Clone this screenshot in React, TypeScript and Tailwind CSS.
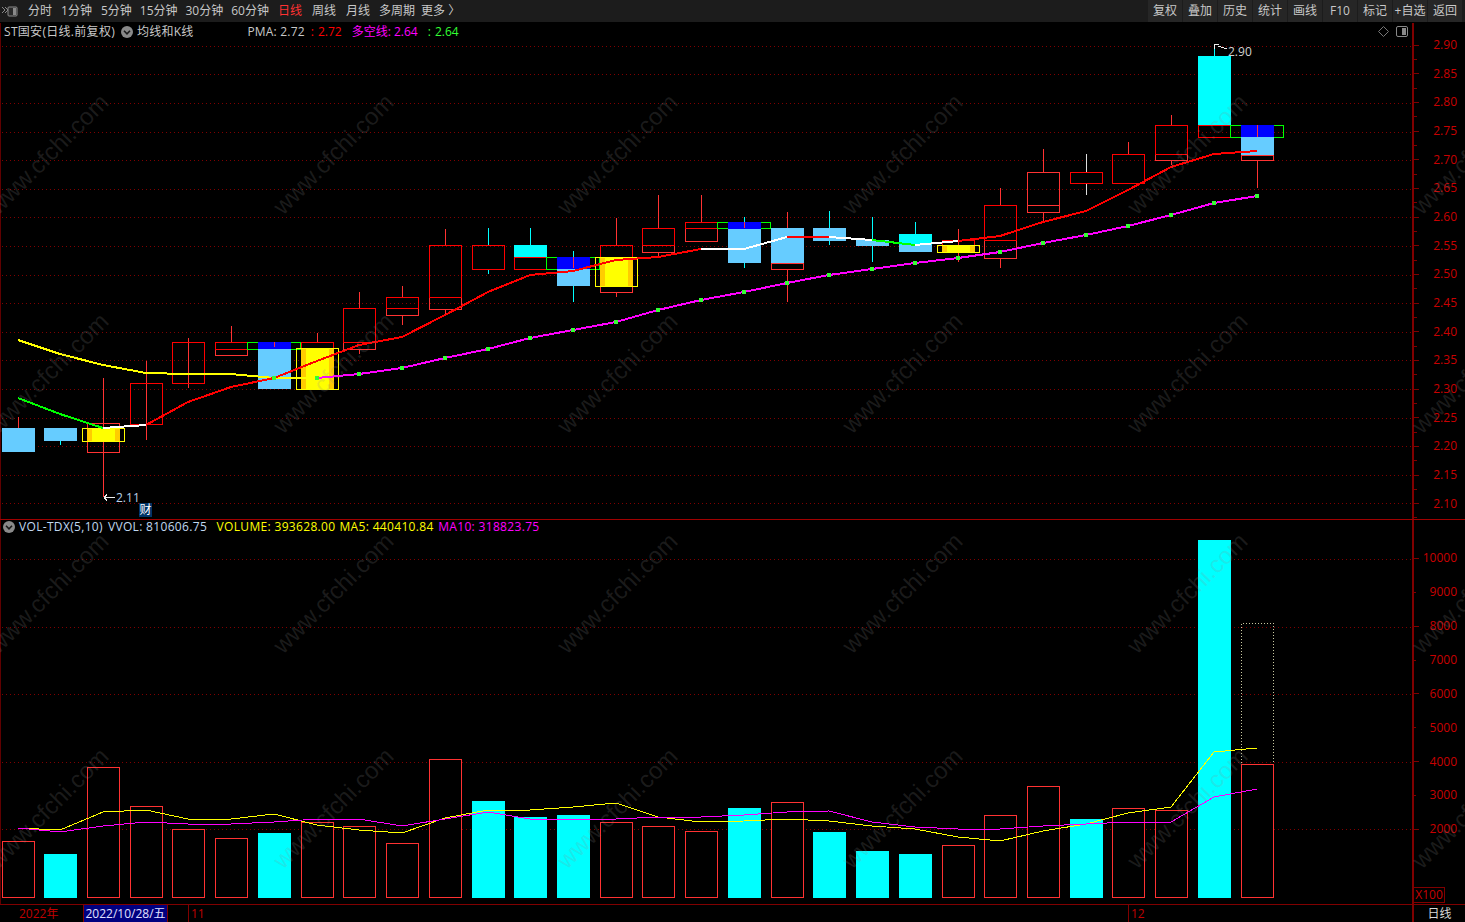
const R = "#ff0000";
const P = "#ff3232";
const C = "#00ffff";
const LB = "#66ccff";
const BL = "#0000ff";
const G = "#00ff00";
const Y = "#ffff00";
const O = "#ffcc00";

// left edge of each day's bar
const lefts = [2, 44, 87, 130, 172, 215, 258, 301, 343, 386, 429, 472, 514, 557, 600, 642, 685, 728, 771, 813, 856, 899, 942, 984, 1027, 1070, 1112, 1155, 1198, 1241];
const lx = (i: number) => lefts[i];
const cx = (i: number) => lefts[i] + 16;

type Seg = [number, number, string];

interface Candle {
  wicks?: Seg[];
  green?: [number, number];
  boxes?: Seg[];
  fills?: Seg[];
  over?: [number, number];
  tick?: [number, number];
}

const candles: Candle[] = [
  { wicks: [[417, 428, P]], fills: [[428, 452, LB]] },
  { wicks: [[441, 445, C]], fills: [[428, 441, LB]] },
  { wicks: [[378, 497, P]], boxes: [[423, 452, P]], over: [428, 441] },
  { wicks: [[361, 440, P]], boxes: [[383, 424, R]] },
  { wicks: [[338, 388, P]], boxes: [[342, 383, R]] },
  { wicks: [[326, 342, P]], boxes: [[342, 355, P], [342, 349, R]] },
  { green: [342, 349], fills: [[342, 349, BL], [349, 389, LB]], tick: [342, 347] },
  { wicks: [[333, 342, P]], boxes: [[342, 389, R]], over: [348, 389] },
  { wicks: [[292, 308, P], [349, 354, P]], boxes: [[342, 349, P], [308, 342, R]] },
  { wicks: [[286, 297, P], [315, 325, P]], boxes: [[308, 315, P], [297, 308, R]] },
  { wicks: [[229, 245, P], [309, 314, P]], boxes: [[297, 309, P], [245, 297, R]] },
  { wicks: [[228, 245, C], [269, 274, C]], boxes: [[245, 269, R]] },
  { wicks: [[228, 245, C]], fills: [[245, 257, C]], boxes: [[257, 269, R]] },
  { wicks: [[251, 257, C], [286, 302, C]], green: [257, 269], fills: [[257, 269, BL], [269, 286, LB]], tick: [257, 268] },
  { wicks: [[218, 245, P], [292, 297, P]], boxes: [[245, 292, P], [245, 257, R]], over: [257, 286] },
  { wicks: [[195, 228, P], [252, 257, P]], boxes: [[245, 252, P], [228, 245, R]] },
  { wicks: [[195, 222, P]], boxes: [[228, 241, P], [222, 228, R]] },
  { wicks: [[217, 222, C], [263, 268, C]], green: [222, 228], fills: [[222, 229, BL], [229, 263, LB]], tick: [222, 228] },
  { wicks: [[212, 228, P], [269, 302, P]], boxes: [[263, 269, P]], fills: [[228, 263, LB]] },
  { wicks: [[211, 245, C]], fills: [[228, 241, LB]] },
  { wicks: [[217, 262, C]], fills: [[240, 246, LB]] },
  { wicks: [[222, 234, C]], fills: [[245, 252, LB], [234, 245, C]] },
  { wicks: [[229, 262, P]], boxes: [[240, 252, R]], over: [245, 252] },
  { wicks: [[188, 205, P], [258, 268, P]], boxes: [[240, 258, P], [205, 240, R]] },
  { wicks: [[149, 172, P], [212, 222, P]], boxes: [[205, 212, P], [172, 205, P]] },
  { wicks: [[154, 172, "#dddddd"], [183, 195, "#dddddd"]], boxes: [[172, 183, R]] },
  { wicks: [[142, 154, P]], boxes: [[154, 183, R]] },
  { wicks: [[115, 125, P], [160, 165, P]], boxes: [[154, 160, P], [125, 154, R]] },
  { wicks: [[46, 56, C]], fills: [[56, 125, C]], boxes: [[125, 137, R]] },
  { wicks: [[160, 188, P]], green: [125, 137], fills: [[125, 137, BL], [137, 155, LB]], boxes: [[155, 160, P]], tick: [125, 137] },
];

// price moving average, split where it changes colour
const pmaRuns: { color: string; pts: [number, number][] }[] = [
  { color: Y, pts: [[0, 340], [1, 354], [2, 365], [3, 373], [4, 374], [5, 374], [6, 378], [7, 378]] },
  { color: G, pts: [[0, 398], [1, 414], [2, 428]] },
  { color: "#ffffff", pts: [[2, 428], [3, 425]] },
  { color: R, pts: [[3, 425], [4, 402], [5, 387], [6, 378], [7, 361], [8, 345], [9, 337], [10, 315], [11, 292], [12, 275], [13, 271], [14, 260], [15, 257], [16, 249]] },
  { color: "#ffffff", pts: [[16, 249], [17, 249], [18, 237]] },
  { color: R, pts: [[18, 237], [19, 237]] },
  { color: "#ffffff", pts: [[19, 237], [20, 240]] },
  { color: G, pts: [[20, 240], [21, 245]] },
  { color: "#ffffff", pts: [[21, 245], [22, 241]] },
  { color: R, pts: [[22, 241], [23, 236], [24, 222], [25, 211], [26, 190], [27, 167], [28, 154], [29, 151]] },
];

const longLine: [number, number][] = [
  [7, 378], [8, 374], [9, 368], [10, 358], [11, 349], [12, 338], [13, 330], [14, 322], [15, 310], [16, 300],
  [17, 292], [18, 283], [19, 275], [20, 269], [21, 263], [22, 258], [23, 252], [24, 243], [25, 235], [26, 226],
  [27, 215], [28, 203], [29, 196],
];

const volumes: [number, boolean][] = [
  [841, false], [854, true], [767, false], [806, false], [829, false], [838, false], [833, true], [822, false],
  [826, false], [843, false], [759, false], [801, true], [817, true], [815, true], [822, false], [826, false],
  [831, false], [808, true], [802, false], [832, true], [851, true], [854, true], [845, false], [815, false],
  [786, false], [819, true], [808, false], [810, false], [540, true], [764, false],
];

const ma5 = [828, 830, 812, 810, 819, 819, 814, 825, 830, 833, 818, 810, 810, 807, 803, 817, 822, 821, 819, 821, 826, 829, 837, 841, 831, 824, 813, 807, 752, 748];
const ma10 = [828, 832, 826, 822, 824, 824, 822, 819, 819, 826, 819, 812, 819, 819, 819, 817, 817, 815, 812, 811, 822, 827, 829, 829, 826, 824, 822, 822, 797, 789];

const toPoints = (pts: [number, number][]) => pts.map(([i, y]) => `${cx(i)},${y}`).join(" ");
const series = (ys: number[]) => ys.map((y, i) => `${cx(i)},${y}`).join(" ");

const priceLevels = Array.from({ length: 17 }, (_, k) => (2.9 - k * 0.05).toFixed(2));
const volumeLevels = [10000, 9000, 8000, 7000, 6000, 5000, 4000, 3000, 2000];

const rightTabs = ["复权", "叠加", "历史", "统计", "画线", "F10", "标记", "+自选", "返回"];

const CircleChevron = () => (
  <svg width="12" height="12" viewBox="0 0 12 12" className="shrink-0">
    <circle cx="6" cy="6" r="6" fill="#8a8a8a" />
    <path d="M3 4.8 L6 7.8 L9 4.8" fill="none" stroke="#1a1a1a" strokeWidth="1.6" />
  </svg>
);

const CandleShape = ({ c, i }: { c: Candle; i: number }) => {
  const x = lx(i);
  const mid = cx(i) + 0.5;
  return (
    <g>
      {c.wicks?.map(([a, b, color]) => (
        <line key={a} x1={mid} x2={mid} y1={a} y2={b} stroke={color} />
      ))}
      {c.green && (
        <rect x={x - 10.5} y={c.green[0] + 0.5} width={53} height={c.green[1] - c.green[0]} fill="none" stroke={G} />
      )}
      {c.fills?.map(([a, b, color]) => (
        <rect key={a} x={x} y={a} width={33} height={b - a} fill={color} />
      ))}
      {c.boxes?.map(([a, b, color]) => (
        <rect key={`${a}-${b}`} x={x + 0.5} y={a + 0.5} width={32} height={b - a} fill="none" stroke={color} />
      ))}
      {c.over && (
        <g>
          <rect x={x} y={c.over[0]} width={33} height={c.over[1] - c.over[0]} fill={Y} />
          <rect x={x} y={c.over[0]} width={5} height={c.over[1] - c.over[0]} fill={O} />
          <rect x={x + 28} y={c.over[0]} width={5} height={c.over[1] - c.over[0]} fill={O} />
          <rect x={x - 4.5} y={c.over[0] + 0.5} width={42} height={c.over[1] - c.over[0]} fill="none" stroke={Y} />
        </g>
      )}
      {c.tick && <line x1={mid} x2={mid} y1={c.tick[0]} y2={c.tick[1]} stroke={P} />}
    </g>
  );
};

const PriceChart = () => (
  <svg width="1412" height="496" viewBox="0 23 1412 496" shapeRendering="crispEdges" className="block shrink-0">
    <line x1="0.5" x2="0.5" y1="23" y2="519" stroke="#600000" />
    {priceLevels.map((_, k) => {
      const y = Math.round(45.8 + k * 28.6) + 0.5;
      return <line key={k} x1="2" x2="1412" y1={y} y2={y} stroke="#800000" strokeDasharray="1 3" />;
    })}
    {candles.map((c, i) => (
      <CandleShape key={i} c={c} i={i} />
    ))}
    {pmaRuns.map((run, k) => (
      <polyline key={k} points={toPoints(run.pts)} fill="none" stroke={run.color} strokeWidth="2" />
    ))}
    <polyline points={toPoints(longLine)} fill="none" stroke="#ff00ff" strokeWidth="2" />
    {longLine.map(([i, y]) => (
      <rect key={i} x={cx(i) - 2} y={y - 2} width="4" height="4" fill="#33ff33" />
    ))}
    <rect x={cx(6) - 2} y={376} width="4" height="4" fill="#33ff33" />
    <g stroke="#eeeeee">
      <line x1="1214" x2="1219" y1="44.5" y2="44.5" />
      <line x1="1214.5" x2="1214.5" y1="44" y2="49" />
      <line x1="1218" x2="1227" y1="46" y2="49" />
      <line x1="104" x2="115" y1="497.5" y2="497.5" />
      <line x1="104" x2="107" y1="497.5" y2="494.5" />
      <line x1="104" x2="107" y1="497.5" y2="500.5" />
    </g>
  </svg>
);

const VolumeChart = () => (
  <svg width="1412" height="384" viewBox="0 520 1412 384" shapeRendering="crispEdges" className="block shrink-0">
    <line x1="0.5" x2="0.5" y1="520" y2="904" stroke="#600000" />
    {[559, 627, 694, 762, 829].map((y) => (
      <line key={y} x1="2" x2="1412" y1={y + 0.5} y2={y + 0.5} stroke="#800000" strokeDasharray="1 3" />
    ))}
    {volumes.map(([top, solid], i) =>
      solid ? (
        <rect key={i} x={lx(i)} y={top} width="33" height={898 - top} fill={C} />
      ) : (
        <rect key={i} x={lx(i) + 0.5} y={top + 0.5} width="32" height={897 - top} fill="#000000" stroke={P} />
      )
    )}
    <path
      d={`M${lx(29) + 0.5} 763 V623.5 H${lx(29) + 32.5} V763`}
      fill="none"
      stroke="#c8c8a0"
      strokeDasharray="1 2"
    />
    <polyline points={series(ma5)} fill="none" stroke={Y} />
    <polyline points={series(ma10)} fill="none" stroke="#ff00ff" />
  </svg>
);

// watermark sits over both panels
const Watermark = () => {
  const xs = [54, 339, 623, 908, 1193, 1478];
  const ys = [160, 379, 599, 814];
  return (
    <svg width="1465" height="922" className="pointer-events-none absolute left-0 top-0">
      {ys.map((y) =>
        xs.map((x) => (
          <text
            key={`${x}-${y}`}
            x={x}
            y={y}
            textAnchor="middle"
            transform={`rotate(-45 ${x} ${y})`}
            fontSize="24"
            fill="#8c8c8c"
            fillOpacity="0.2"
            fontFamily='"Liberation Sans", sans-serif'
          >
            www.cfchi.com
          </text>
        ))
      )}
    </svg>
  );
};

export default function App() {
  return (
    <div className="relative flex h-[922px] w-[1465px] flex-col overflow-hidden bg-black font-['Open_Sans','Noto_Sans_CJK_SC',sans-serif] text-[12px] leading-none text-[#c8c8c8]">
      <header className="flex h-[23px] shrink-0 items-center border-b border-[#000000] bg-[#1c1c1c]">
        <svg width="16" height="12" viewBox="0 0 16 12" className="ml-[2px] mr-[10px] shrink-0">
          <path d="M0 2 L3 5 L0 8 M3 2 L6 5 L3 8" fill="none" stroke="#8a8a8a" />
          <rect x="6" y="2" width="9" height="9" rx="1" fill="#2a2a2a" stroke="#8a8a8a" />
          <rect x="11" y="3" width="3" height="7" fill="#8a8a8a" />
        </svg>
        <nav className="flex items-center">
          <span>分时</span>
          <span className="ml-[9px]">1分钟</span>
          <span className="ml-[9px]">5分钟</span>
          <span className="ml-[8px]">15分钟</span>
          <span className="ml-[8px]">30分钟</span>
          <span className="ml-[8px]">60分钟</span>
          <span className="ml-[9px] text-[#ff3232]">日线</span>
          <span className="ml-[10px]">周线</span>
          <span className="ml-[10px]">月线</span>
          <span className="ml-[9px]">多周期</span>
          <span className="ml-[6px]">更多 〉</span>
        </nav>
        <div className="ml-auto mr-[3px] flex h-full items-center gap-px">
          {rightTabs.map((tab) => (
            <span key={tab} className="flex h-[22px] w-[34px] items-center justify-center bg-[#262626] whitespace-nowrap">
              {tab}
            </span>
          ))}
        </div>
      </header>

      <section className="relative flex h-[496px] shrink-0">
        <PriceChart />
        <div className="flex flex-1 flex-col border-l-2 border-[#800000] pt-[15px]">
          {priceLevels.map((level) => (
            <div key={level}>
              <div className="flex h-[14.34px] items-center">
                <span className="h-px w-[5px] bg-[#800000]" />
                <span className="ml-auto pr-[8px] text-[#c80000]">{level}</span>
              </div>
              <div className="flex h-[14.34px] items-center">
                <span className="h-px w-[3px] bg-[#800000]" />
              </div>
            </div>
          ))}
        </div>

        <div className="absolute left-[4px] top-[2px] flex h-[14px] items-center whitespace-nowrap">
          <span className="tracking-[0.3px]">ST国安(日线.前复权)</span>
          <span className="ml-[6px]">
            <CircleChevron />
          </span>
          <span className="ml-[4px] tracking-[0.2px]">均线和K线</span>
          <span className="ml-[54px] tracking-[0.2px]">PMA: 2.72</span>
          <span className="ml-[6px] text-[#ff0000]">:</span>
          <span className="ml-[4px] text-[#ff0000]">2.72</span>
          <span className="ml-[10px] text-[#ff00ff]">多空线: 2.64</span>
          <span className="ml-[10px] text-[#33ff33]">:</span>
          <span className="ml-[4px] text-[#33ff33]">2.64</span>
        </div>
        <div className="absolute left-[1378px] top-[3px] flex items-center gap-[7px]">
          <svg width="11" height="11" viewBox="0 0 11 11">
            <path d="M5.5 0.5 L10.5 5.5 L5.5 10.5 L0.5 5.5 Z" fill="none" stroke="#777777" />
          </svg>
          <svg width="12" height="11" viewBox="0 0 12 11">
            <rect x="0.5" y="0.5" width="11" height="10" rx="1.5" fill="none" stroke="#888888" />
            <rect x="6" y="2" width="4" height="7" fill="#888888" />
          </svg>
        </div>
        <span className="absolute left-[1228px] top-[23px] text-[#d0d0d0]">2.90</span>
        <span className="absolute left-[116px] top-[469px] text-[#b8d0e8]">2.11</span>
        <span className="absolute left-[139px] top-[480px] flex h-[14px] w-[13px] items-center justify-center bg-[#003366] text-[#ffffff]">
          财
        </span>
      </section>

      <section className="relative flex min-h-0 flex-1 border-t border-[#a00000]">
        <VolumeChart />
        <div className="relative flex flex-1 flex-col border-l-2 border-[#800000] pt-[21.5px]">
          {volumeLevels.map((level) => (
            <div key={level} className="flex h-[33.87px] items-center">
              <span className={level % 2000 === 0 ? "h-px w-[5px] bg-[#800000]" : "h-px w-[2px] bg-[#800000]"} />
              <span className="ml-auto pr-[8px] text-[#c80000]">{level}</span>
            </div>
          ))}
          <span className="absolute bottom-[1px] left-[-1px] flex h-[16px] w-[32px] items-center justify-center border border-[#800000] text-[#c80000]">
            X100
          </span>
        </div>

        <div className="absolute left-[3px] top-[0px] flex h-[14px] items-center whitespace-nowrap tracking-[0.33px]">
          <CircleChevron />
          <span className="ml-[4px] text-[#c0d8f0]">VOL-TDX(5,10)</span>
          <span className="ml-[5px] text-[#c0d8f0]">VVOL: 810606.75</span>
          <span className="ml-[9.5px] text-[#ffff00]">VOLUME: 393628.00</span>
          <span className="ml-[4px] text-[#ffff00]">MA5: 440410.84</span>
          <span className="ml-[4.5px] text-[#ff00ff]">MA10: 318823.75</span>
        </div>
      </section>

      <footer className="flex h-[18px] shrink-0 items-center border-t border-[#800000] text-[#c00000]">
        <span className="ml-[19px] w-[64px]">2022年</span>
        <span className="flex h-full w-[85px] items-center justify-center border-x border-[#800000] bg-[#000080] text-[#e0e0ff] whitespace-nowrap">
          2022/10/28/五
        </span>
        <span className="ml-[20px] flex h-full w-[940px] items-center border-l border-[#800000] pl-[2px]">11</span>
        <span className="flex h-full items-center border-l border-[#800000] pl-[2px]">12</span>
        <span className="ml-auto flex h-full w-[53px] items-center justify-center border-l-2 border-[#800000] text-[#d8d8d8]">
          日线
        </span>
      </footer>

      <Watermark />
    </div>
  );
}
